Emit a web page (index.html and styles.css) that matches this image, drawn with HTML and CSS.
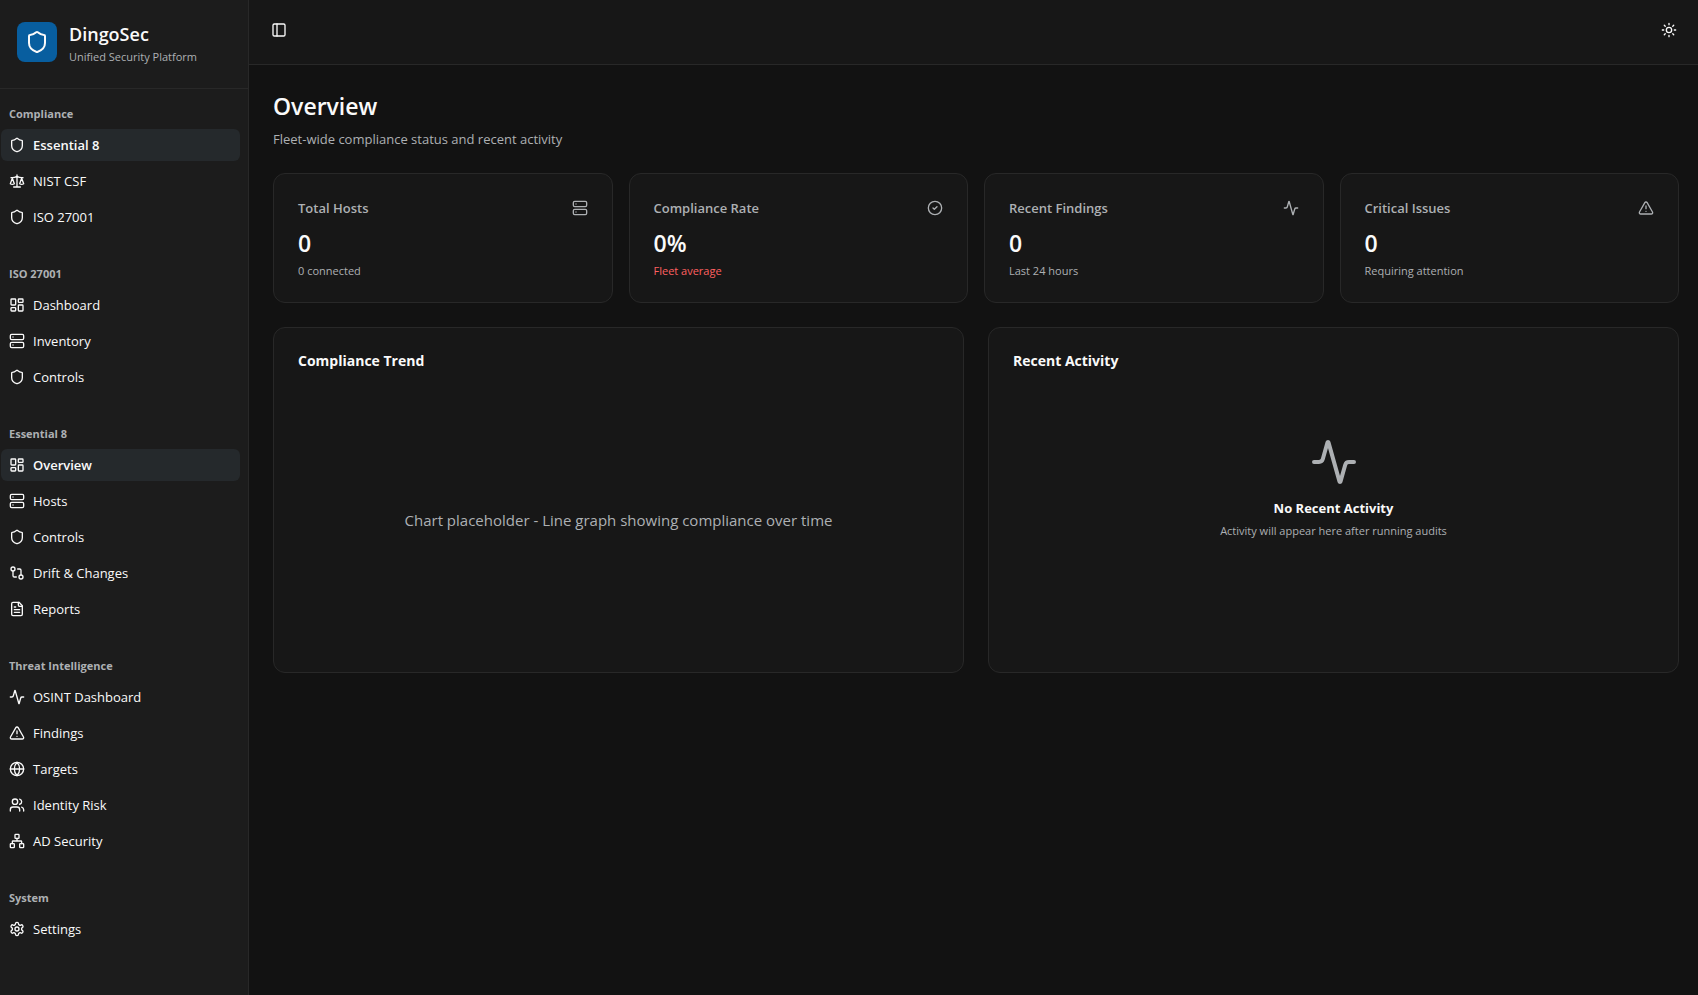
FILE: index.html
```html
<!DOCTYPE html>
<html lang="en">
<head>
<meta charset="utf-8">
<meta name="viewport" content="width=device-width, initial-scale=1">
<title>DingoSec – Overview</title>
<link rel="stylesheet" href="styles.css">
</head>
<body>
<svg class="sprite" aria-hidden="true">
  <symbol id="shield" viewBox="0 0 24 24"><path d="M20 13c0 5-3.500 7.500-7.660 8.950a1 1 0 0 1-.67-.01C7.500 20.500 4 18 4 13V6a1 1 0 0 1 1-1c2 0 4.500-1.200 6.240-2.720a1.170 1.170 0 0 1 1.520 0C14.510 3.810 17 5 19 5a1 1 0 0 1 1 1z"/></symbol>
  <symbol id="scale" viewBox="0 0 24 24"><path d="m16 16 3-8 3 8c-.87.65-1.920 1-3 1s-2.130-.35-3-1Z"/><path d="m2 16 3-8 3 8c-.87.65-1.920 1-3 1s-2.130-.35-3-1Z"/><path d="M7 21h10M12 3v18M3 7h2c2 0 5-1 7-2 2 1 5 2 7 2h2"/></symbol>
  <symbol id="dashboard" viewBox="0 0 24 24"><rect x="3" y="3" width="7" height="9" rx="1"/><rect x="14" y="3" width="7" height="5" rx="1"/><rect x="14" y="12" width="7" height="9" rx="1"/><rect x="3" y="16" width="7" height="5" rx="1"/></symbol>
  <symbol id="server" viewBox="0 0 24 24"><rect x="2" y="2" width="20" height="8" rx="2"/><rect x="2" y="14" width="20" height="8" rx="2"/><path d="M6 6h.01M6 18h.01"/></symbol>
  <symbol id="compare" viewBox="0 0 24 24"><circle cx="18" cy="18" r="3"/><circle cx="6" cy="6" r="3"/><path d="M13 6h3a2 2 0 0 1 2 2v7M11 18H8a2 2 0 0 1-2-2V9"/></symbol>
  <symbol id="file" viewBox="0 0 24 24"><path d="M15 2H6a2 2 0 0 0-2 2v16a2 2 0 0 0 2 2h12a2 2 0 0 0 2-2V7Z"/><path d="M14 2v4a2 2 0 0 0 2 2h4M10 9H8M16 13H8M16 17H8"/></symbol>
  <symbol id="activity" viewBox="0 0 24 24"><path d="M22 12h-2.480a2 2 0 0 0-1.930 1.460l-2.350 8.360a.25.25 0 0 1-.48 0L9.240 2.180a.25.25 0 0 0-.48 0l-2.350 8.360A2 2 0 0 1 4.490 12H2"/></symbol>
  <symbol id="alert" viewBox="0 0 24 24"><path d="m21.730 18-8-14a2 2 0 0 0-3.480 0l-8 14A2 2 0 0 0 4 21h16a2 2 0 0 0 1.730-3"/><path d="M12 9v4M12 17h.01"/></symbol>
  <symbol id="globe" viewBox="0 0 24 24"><circle cx="12" cy="12" r="10"/><path d="M12 2a14.500 14.500 0 0 0 0 20 14.500 14.500 0 0 0 0-20M2 12h20"/></symbol>
  <symbol id="users" viewBox="0 0 24 24"><path d="M16 21v-2a4 4 0 0 0-4-4H6a4 4 0 0 0-4 4v2"/><circle cx="9" cy="7" r="4"/><path d="M22 21v-2a4 4 0 0 0-3-3.870M16 3.130a4 4 0 0 1 0 7.750"/></symbol>
  <symbol id="network" viewBox="0 0 24 24"><rect x="16" y="16" width="6" height="6" rx="1"/><rect x="2" y="16" width="6" height="6" rx="1"/><rect x="9" y="2" width="6" height="6" rx="1"/><path d="M5 16v-3a1 1 0 0 1 1-1h12a1 1 0 0 1 1 1v3M12 12V8"/></symbol>
  <symbol id="settings" viewBox="0 0 24 24"><path d="M12.220 2h-.44a2 2 0 0 0-2 2v.18a2 2 0 0 1-1 1.730l-.43.25a2 2 0 0 1-2 0l-.15-.08a2 2 0 0 0-2.730.73l-.22.38a2 2 0 0 0 .73 2.730l.15.1a2 2 0 0 1 1 1.720v.51a2 2 0 0 1-1 1.740l-.15.09a2 2 0 0 0-.73 2.730l.22.38a2 2 0 0 0 2.730.73l.15-.08a2 2 0 0 1 2 0l.43.25a2 2 0 0 1 1 1.730V20a2 2 0 0 0 2 2h.44a2 2 0 0 0 2-2v-.18a2 2 0 0 1 1-1.730l.43-.25a2 2 0 0 1 2 0l.15.08a2 2 0 0 0 2.730-.73l.22-.39a2 2 0 0 0-.73-2.730l-.15-.08a2 2 0 0 1-1-1.740v-.5a2 2 0 0 1 1-1.740l.15-.09a2 2 0 0 0 .73-2.730l-.22-.38a2 2 0 0 0-2.730-.73l-.15.08a2 2 0 0 1-2 0l-.43-.25a2 2 0 0 1-1-1.730V4a2 2 0 0 0-2-2z"/><circle cx="12" cy="12" r="3"/></symbol>
  <symbol id="panel" viewBox="0 0 24 24"><rect x="3" y="3" width="18" height="18" rx="2"/><path d="M9 3v18"/></symbol>
  <symbol id="sun" viewBox="0 0 24 24"><circle cx="12" cy="12" r="4"/><path d="M12 2v2M12 20v2M4.930 4.930l1.410 1.410M17.660 17.660l1.410 1.410M2 12h2M20 12h2M6.340 17.660l-1.410 1.410M19.070 4.930l-1.410 1.410"/></symbol>
  <symbol id="check" viewBox="0 0 24 24"><circle cx="12" cy="12" r="10"/><path d="m9 12 2 2 4-4"/></symbol>
</svg>
<div class="app">
  <aside class="sidebar">
    <div class="brand">
      <span class="brand-logo"><svg class="icon icon-md"><use href="#shield"/></svg></span>
      <div class="brand-text">
        <span class="brand-name">DingoSec</span>
        <span class="brand-tagline">Unified Security Platform</span>
      </div>
    </div>
    <nav class="nav" aria-label="Main">
      <section class="nav-group">
        <h2 class="nav-label">Compliance</h2>
        <ul class="nav-list">
          <li><a class="nav-link is-active" href="#"><svg class="icon"><use href="#shield"/></svg>Essential 8</a></li>
          <li><a class="nav-link" href="#"><svg class="icon"><use href="#scale"/></svg>NIST CSF</a></li>
          <li><a class="nav-link" href="#"><svg class="icon"><use href="#shield"/></svg>ISO 27001</a></li>
        </ul>
      </section>
      <section class="nav-group">
        <h2 class="nav-label">ISO 27001</h2>
        <ul class="nav-list">
          <li><a class="nav-link" href="#"><svg class="icon"><use href="#dashboard"/></svg>Dashboard</a></li>
          <li><a class="nav-link" href="#"><svg class="icon"><use href="#server"/></svg>Inventory</a></li>
          <li><a class="nav-link" href="#"><svg class="icon"><use href="#shield"/></svg>Controls</a></li>
        </ul>
      </section>
      <section class="nav-group">
        <h2 class="nav-label">Essential 8</h2>
        <ul class="nav-list">
          <li><a class="nav-link is-active" href="#" aria-current="page"><svg class="icon"><use href="#dashboard"/></svg>Overview</a></li>
          <li><a class="nav-link" href="#"><svg class="icon"><use href="#server"/></svg>Hosts</a></li>
          <li><a class="nav-link" href="#"><svg class="icon"><use href="#shield"/></svg>Controls</a></li>
          <li><a class="nav-link" href="#"><svg class="icon"><use href="#compare"/></svg>Drift &amp; Changes</a></li>
          <li><a class="nav-link" href="#"><svg class="icon"><use href="#file"/></svg>Reports</a></li>
        </ul>
      </section>
      <section class="nav-group">
        <h2 class="nav-label">Threat Intelligence</h2>
        <ul class="nav-list">
          <li><a class="nav-link" href="#"><svg class="icon"><use href="#activity"/></svg>OSINT Dashboard</a></li>
          <li><a class="nav-link" href="#"><svg class="icon"><use href="#alert"/></svg>Findings</a></li>
          <li><a class="nav-link" href="#"><svg class="icon"><use href="#globe"/></svg>Targets</a></li>
          <li><a class="nav-link" href="#"><svg class="icon"><use href="#users"/></svg>Identity Risk</a></li>
          <li><a class="nav-link" href="#"><svg class="icon"><use href="#network"/></svg>AD Security</a></li>
        </ul>
      </section>
      <section class="nav-group">
        <h2 class="nav-label">System</h2>
        <ul class="nav-list">
          <li><a class="nav-link" href="#"><svg class="icon"><use href="#settings"/></svg>Settings</a></li>
        </ul>
      </section>
    </nav>
  </aside>
  <div class="main">
    <header class="topbar">
      <button class="icon-button" type="button" aria-label="Toggle sidebar"><svg class="icon"><use href="#panel"/></svg></button>
      <button class="icon-button" type="button" aria-label="Toggle theme"><svg class="icon"><use href="#sun"/></svg></button>
    </header>
    <main class="content">
      <div class="page-head">
        <h1 class="page-title">Overview</h1>
        <p class="page-subtitle">Fleet-wide compliance status and recent activity</p>
      </div>
      <div class="stats">
        <section class="card stat">
          <div class="stat-head"><h2 class="stat-label">Total Hosts</h2><svg class="icon"><use href="#server"/></svg></div>
          <p class="stat-value">0</p>
          <p class="stat-note">0 connected</p>
        </section>
        <section class="card stat">
          <div class="stat-head"><h2 class="stat-label">Compliance Rate</h2><svg class="icon"><use href="#check"/></svg></div>
          <p class="stat-value">0%</p>
          <p class="stat-note is-danger">Fleet average</p>
        </section>
        <section class="card stat">
          <div class="stat-head"><h2 class="stat-label">Recent Findings</h2><svg class="icon"><use href="#activity"/></svg></div>
          <p class="stat-value">0</p>
          <p class="stat-note">Last 24 hours</p>
        </section>
        <section class="card stat">
          <div class="stat-head"><h2 class="stat-label">Critical Issues</h2><svg class="icon"><use href="#alert"/></svg></div>
          <p class="stat-value">0</p>
          <p class="stat-note">Requiring attention</p>
        </section>
      </div>
      <div class="panels">
        <section class="card">
          <h2 class="panel-title">Compliance Trend</h2>
          <div class="panel-body"><p class="placeholder">Chart placeholder - Line graph showing compliance over time</p></div>
        </section>
        <section class="card">
          <h2 class="panel-title">Recent Activity</h2>
          <div class="panel-body is-top">
            <svg class="icon icon-lg"><use href="#activity"/></svg>
            <h3 class="empty-title">No Recent Activity</h3>
            <p class="empty-text">Activity will appear here after running audits</p>
          </div>
        </section>
      </div>
    </main>
  </div>
</div>
</body>
</html>
```
FILE: styles.css
```css
:root {
  --bg: #121212;
  --surface: #171717;
  --sidebar: #1c1c1c;
  --border: #282828;
  --active: #25292c;
  --text: #fafafa;
  --muted: #adb0b3;
  --danger: #ff6060;
  --brand: #085e9f;
}

* { box-sizing: border-box; }

body, h1, h2, h3, p, ul { margin: 0; }

body {
  background: var(--bg);
  color: var(--text);
  font-family: "Segoe UI", "Open Sans", "Noto Sans", sans-serif;
  font-size: 13px;
  line-height: 20px;
}

.sprite { display: none; }

.icon {
  flex: none;
  width: 16px;
  height: 16px;
  fill: none;
  stroke: currentColor;
  stroke-width: 2;
  stroke-linecap: round;
  stroke-linejoin: round;
}
.icon-md { width: 24px; height: 24px; }
.icon-lg { width: 48px; height: 48px; color: var(--muted); }

.app { display: flex; min-height: 100vh; }

.sidebar {
  flex: none;
  width: 249px;
  background: var(--sidebar);
  border-right: 1px solid var(--border);
}

.brand {
  display: flex;
  gap: 12px;
  height: 89px;
  padding: 22px 17px;
  border-bottom: 1px solid var(--border);
}
.brand-logo {
  display: grid;
  place-items: center;
  width: 40px;
  height: 40px;
  border-radius: 8px;
  background: var(--brand);
}
.brand-text { display: flex; flex-direction: column; }
.brand-name { font-size: 18px; font-weight: 600; line-height: 24px; }
.brand-tagline { margin-top: 2px; color: var(--muted); font-size: 11px; line-height: 18px; }

.nav { display: flex; flex-direction: column; gap: 8px; }
.nav-group { padding: 8px 8px 8px 1px; }
.nav-label {
  height: 32px;
  padding: 0 8px;
  color: var(--muted);
  font-size: 11px;
  font-weight: 700;
  line-height: 34px;
}
.nav-list {
  display: flex;
  flex-direction: column;
  gap: 4px;
  padding: 0;
  list-style: none;
}
.nav-link {
  display: flex;
  align-items: center;
  gap: 8px;
  height: 32px;
  padding: 0 8px;
  border-radius: 6px;
  color: var(--text);
  text-decoration: none;
}
.nav-link.is-active { background: var(--active); font-weight: 600; }

.main { flex: 1; min-width: 0; }

.topbar {
  display: flex;
  justify-content: space-between;
  height: 65px;
  padding: 16px 15px 0 16px;
  background: var(--surface);
  border-bottom: 1px solid var(--border);
}
.icon-button {
  display: grid;
  place-items: center;
  width: 28px;
  height: 28px;
  padding: 0;
  border: 0;
  border-radius: 6px;
  background: none;
  color: var(--text);
}

.content {
  display: flex;
  flex-direction: column;
  gap: 24px;
  padding: 24px 19px 24px 24px;
}
.page-title { font-size: 23px; font-weight: 600; line-height: 34px; }
.page-subtitle { margin-top: 6px; color: var(--muted); }

.card {
  padding: 24px;
  background: var(--surface);
  border: 1px solid var(--border);
  border-radius: 12px;
}

.stats { display: grid; grid-template-columns: repeat(4, 1fr); gap: 16px; }
.stat { padding-bottom: 22px; }
.stat-head {
  display: flex;
  align-items: center;
  justify-content: space-between;
  color: var(--muted);
}
.stat-label { font-size: 13px; font-weight: 600; line-height: 20px; }
.stat-value { margin-top: 8px; font-size: 23px; font-weight: 600; line-height: 34px; }
.stat-note { margin-top: 2px; color: var(--muted); font-size: 11px; line-height: 18px; }
.stat-note.is-danger { color: var(--danger); }

.panels { display: grid; grid-template-columns: repeat(2, 1fr); gap: 24px; }
.panel-title { font-size: 14px; font-weight: 700; line-height: 18px; }
.panel-body {
  display: flex;
  flex-direction: column;
  align-items: center;
  justify-content: center;
  height: 256px;
  margin-top: 22px;
  text-align: center;
}
.panel-body.is-top { justify-content: flex-start; padding-top: 46px; }
.placeholder { color: var(--muted); font-size: 15px; }
.empty-title { margin-top: 12px; font-size: 13px; font-weight: 700; line-height: 20px; }
.empty-text { margin-top: 4px; color: var(--muted); font-size: 11px; line-height: 18px; }
```
